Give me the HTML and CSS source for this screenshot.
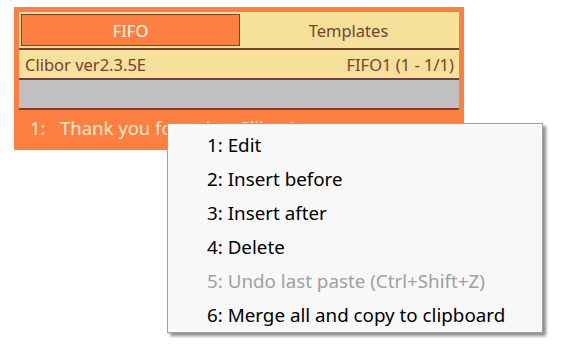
FILE: index.html
```html
<!DOCTYPE html>
<html>
<head>
  <title>Clibor</title>
  <link rel="stylesheet" href="styles.css">
</head>
<body>
  <div class="window">
    <div class="tabs">
      <div class="tab active">FIFO</div>
      <div class="tab">Templates</div>
    </div>
    <div class="info">
      <span>Clibor ver2.3.5E</span>
      <span>FIFO1 (1 - 1/1)</span>
    </div>
    <div class="blank"></div>
    <div class="row">
      <span class="num">1:</span>
      <span>Thank you for using Clibor!</span>
    </div>
  </div>

  <ul class="menu">
    <li>1: Edit</li>
    <li>2: Insert before</li>
    <li>3: Insert after</li>
    <li>4: Delete</li>
    <li class="disabled">5: Undo last paste (Ctrl+Shift+Z)</li>
    <li>6: Merge all and copy to clipboard</li>
  </ul>
</body>
</html>
```

FILE: styles.css
```css
body {
  font-family: "Noto Sans", "Open Sans", sans-serif;
  background-color: #ffffff;
  margin: 0;
  padding: 0;
}

.window {
  width: 450px;
  height: 143px;
  margin: 7px 0 0 14px;
  padding: 5px;
  box-sizing: border-box;
  background-color: #ff7f40;
}

.tabs {
  display: flex;
  height: 38px;
  padding: 2px;
  box-sizing: border-box;
  background-color: #f5e199;
  border-bottom: 2px solid #7a4035;
}

.tab {
  flex: 1;
  display: flex;
  align-items: center;
  justify-content: center;
  font-size: 16.5px;
  color: #7a4035;
}

.tab.active {
  background-color: #ff7f40;
  border: 1px solid #7a4035;
  color: #ffffff;
}

.info {
  display: flex;
  justify-content: space-between;
  align-items: center;
  height: 30px;
  padding: 0 5px 0 6px;
  box-sizing: border-box;
  background-color: #f5e199;
  border-bottom: 2px solid #7a4035;
  font-size: 16.5px;
  color: #7a4035;
}

.blank {
  height: 30px;
  box-sizing: border-box;
  background-color: #c0c0c0;
  border-bottom: 2px solid #7a4035;
}

.row {
  display: flex;
  align-items: center;
  height: 35px;
  padding-left: 11px;
  font-size: 18.5px;
  color: #ffecd6;
  white-space: nowrap;
  overflow: hidden;
}

.row .num {
  width: 30px;
}

.menu {
  position: absolute;
  left: 167px;
  top: 123px;
  width: 376px;
  height: 210px;
  margin: 0;
  padding: 4px 0 0;
  box-sizing: border-box;
  list-style: none;
  background-color: #f8f8f8;
  border: 1px solid #a0a0a0;
  box-shadow: 3px 3px 3px rgba(0, 0, 0, 0.45);
}

.menu li {
  height: 34px;
  line-height: 34px;
  padding-left: 39px;
  font-size: 18.8px;
  color: #000000;
}

.menu li.disabled {
  color: #a0a0a0;
}
```
